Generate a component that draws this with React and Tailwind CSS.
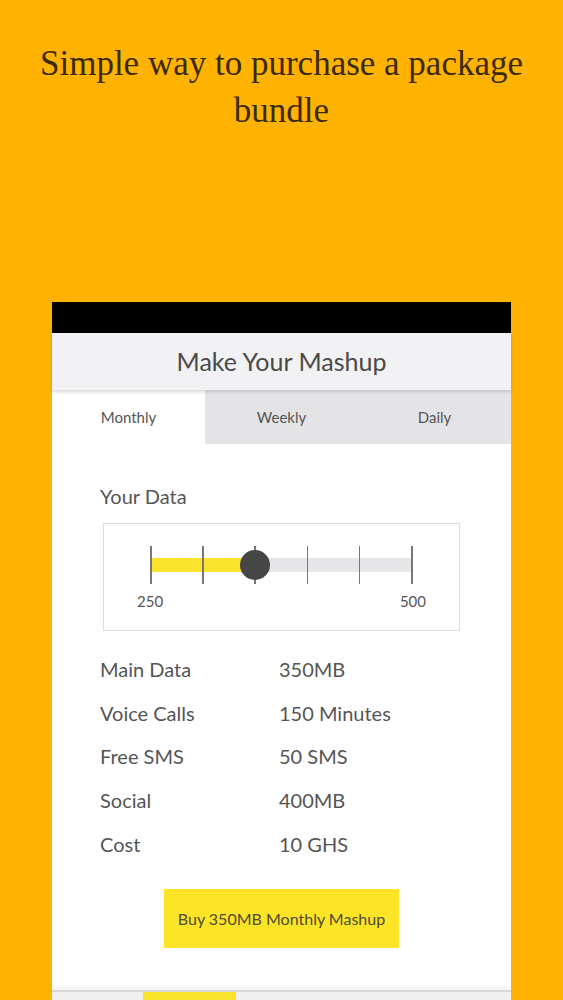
import React from "react";

const rows = [
  ["Main Data", "350MB"],
  ["Voice Calls", "150 Minutes"],
  ["Free SMS", "50 SMS"],
  ["Social", "400MB"],
  ["Cost", "10 GHS"],
];

const sans = { fontFamily: "Lato, 'Open Sans', sans-serif" };

function DataSlider() {
  // ticks every 52px along a 261px track, thumb on the third tick
  const ticks = [0, 1, 2, 3, 4, 5];
  return (
    <div className="mx-[3px] mt-[15px] h-[108px] border border-[#dcdcdc] flex flex-col">
      <div className="relative mx-[46px] mt-[22px] h-[38px]">
        <div className="absolute left-0 right-0 top-[12px] h-[14px] bg-[#e6e5e8]" />
        <div className="absolute left-0 w-[105px] top-[12px] h-[14px] bg-[#fbe22c]" />
        {ticks.map((t) => (
          <div
            key={t}
            className="absolute top-0 h-[38px] w-[1.5px] bg-[#777]"
            style={{ left: `${t * 52.2}px` }}
          />
        ))}
        <div className="absolute left-[90px] top-[4px] w-[30px] h-[30px] rounded-full bg-[#464646]" />
      </div>
      <div className="flex justify-between mx-[33px] mt-[6px] text-[15px] text-[#555]">
        <span>250</span>
        <span>500</span>
      </div>
    </div>
  );
}

export default function App() {
  return (
    <div className="h-[1000px] overflow-hidden bg-[#ffb300]">
      <h1
        className="pt-[40px] px-[20px] text-center text-[35px] leading-[47px] text-[#3b2a0b]"
        style={{ fontFamily: "'Liberation Serif', 'Times New Roman', serif" }}
      >
        Simple way to purchase a package bundle
      </h1>

      <div className="mx-[52px] mt-[168px] bg-white h-[720px] flex flex-col" style={sans}>
        <div className="h-[31px] bg-black" />
        <div className="relative z-10 h-[57px] bg-[#f2f1f3] flex items-center justify-center text-[25px] text-[#4a4a4a] shadow-[0_2px_3px_rgba(0,0,0,0.15)]">
          Make Your Mashup
        </div>
        <div className="grid grid-cols-3 h-[54px] text-[15px] text-[#555]">
          <div className="bg-white flex items-center justify-center">Monthly</div>
          <div className="bg-[#e4e3e6] flex items-center justify-center">Weekly</div>
          <div className="bg-[#e4e3e6] flex items-center justify-center">Daily</div>
        </div>

        <div className="px-[48px] pt-[40px]">
          <div className="text-[20px] leading-[24px] text-[#555]">Your Data</div>
          <DataSlider />

          <div className="mt-[16px] flex flex-col text-[20px] text-[#555]">
            {rows.map(([label, value]) => (
              <div key={label} className="flex h-[43.7px] items-center">
                <span className="w-[179px]">{label}</span>
                <span>{value}</span>
              </div>
            ))}
          </div>

          <div className="flex justify-center mt-[24px]">
            <button
              type="button"
              className="w-[235px] h-[59px] bg-[#fde427] text-[16px] text-[#4f4b33]"
            >
              Buy 350MB Monthly Mashup
            </button>
          </div>
        </div>

        <div className="mt-[42px] h-[2px] bg-[#d8d8d8] shadow-[0_-2px_4px_rgba(0,0,0,0.12)]" />
        <div className="flex bg-[#f0f0f0] h-[20px]">
          <div className="ml-[91px] w-[93px] bg-[#fbe22c]" />
        </div>
      </div>
    </div>
  );
}
